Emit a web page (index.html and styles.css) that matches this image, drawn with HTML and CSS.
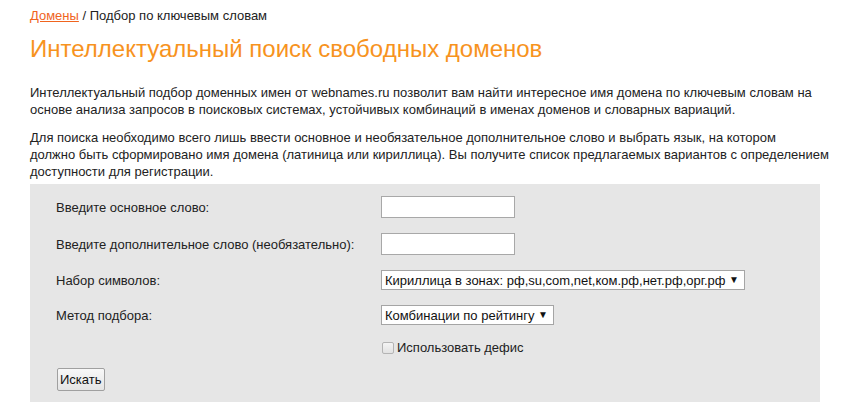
FILE: index.html
```html
<!DOCTYPE html>
<html lang="ru">
<head>
  <meta charset="UTF-8">
  <title>Подбор по ключевым словам</title>
  <link rel="stylesheet" href="styles.css">
</head>
<body>
  <div class="page">
    <div class="breadcrumbs">
      <a href="#">Домены</a> / Подбор по ключевым словам
    </div>

    <h1>Интеллектуальный поиск свободных доменов</h1>

    <div class="intro">
      <p>Интеллектуальный подбор доменных имен от webnames.ru позволит вам найти интересное имя домена по ключевым словам на основе анализа запросов в поисковых системах, устойчивых комбинаций в именах доменов и словарных вариаций.</p>
      <p>Для поиска необходимо всего лишь ввести основное и необязательное дополнительное слово и выбрать язык, на котором<br>
      должно быть сформировано имя домена (латиница или кириллица). Вы получите список предлагаемых вариантов с определением доступности для регистрации.</p>
    </div>

    <form class="search-form">
      <div class="form-row">
        <label for="word1">Введите основное слово:</label>
        <input type="text" id="word1" class="text-input">
      </div>
      <div class="form-row">
        <label for="word2">Введите дополнительное слово (необязательно):</label>
        <input type="text" id="word2" class="text-input">
      </div>
      <div class="form-row">
        <label for="charset">Набор символов:</label>
        <span class="select-wrap charset">
          <select id="charset">
            <option>Кириллица в зонах: рф,su,com,net,ком.рф,нет.рф,орг.рф</option>
            <option>Латиница</option>
          </select>
        </span>
      </div>
      <div class="form-row">
        <label for="method">Метод подбора:</label>
        <span class="select-wrap method">
          <select id="method">
            <option>Комбинации по рейтингу</option>
            <option>Все комбинации</option>
          </select>
        </span>
      </div>
      <div class="form-row check-row">
        <span class="spacer"></span>
        <label class="check-label"><input type="checkbox" class="check"> Использовать дефис</label>
      </div>
      <div class="form-row submit-row">
        <button type="submit">Искать</button>
      </div>
    </form>
  </div>
</body>
</html>
```

FILE: styles.css
```css
body {
  margin: 0;
  padding: 0;
  background: #fff;
  font-family: "Liberation Sans", Arial, sans-serif;
  font-size: 13px;
  color: #222;
}
.page {
  width: 790px;
  padding: 7px 32px 0 30px;
}
.breadcrumbs {
  line-height: 17px;
}
.breadcrumbs a {
  color: #f0641e;
}
h1 {
  margin: 11px 0 21px 0;
  font-size: 24px;
  line-height: 28px;
  font-weight: normal;
  color: #f7931e;
}
.intro {
  margin-right: -16px;
}
.intro p {
  margin: 0 0 11px 0;
  line-height: 17px;
}
.intro p:last-child {
  margin-bottom: 4px;
}
.search-form {
  background: #e6e6e6;
  padding: 12px 26px 12px 26px;
}
.form-row {
  display: flex;
  align-items: center;
  margin-bottom: 15px;
}
.form-row label,
.form-row .spacer {
  width: 325px;
  flex: none;
}
.text-input {
  width: 134px;
  height: 22px;
  box-sizing: border-box;
  border: 1px solid #a8a8a8;
  background: #fff;
  padding: 2px 3px;
  font: inherit;
}
.select-wrap {
  position: relative;
  display: inline-block;
}
.select-wrap select {
  appearance: none;
  -webkit-appearance: none;
  height: 20px;
  box-sizing: border-box;
  border: 1px solid #a5a5a5;
  background: #fff;
  padding: 0 18px 0 3px;
  font: inherit;
  color: #111;
}
.select-wrap::after {
  content: "\25BC";
  position: absolute;
  right: 6px;
  top: 5px;
  font-size: 10px;
  line-height: 10px;
  color: #111;
  pointer-events: none;
}
.charset select {
  width: 364px;
}
.method select {
  width: 173px;
}
.check-row {
  margin-bottom: 13px;
}
.check-row .check-label {
  width: auto;
  display: flex;
  align-items: center;
}
.check {
  appearance: none;
  -webkit-appearance: none;
  width: 12px;
  height: 12px;
  margin: 0 3px 0 1px;
  border: 1px solid #b4b4b4;
  border-radius: 2px;
  background: linear-gradient(#f4f4f4, #e2e2e2);
}
.submit-row {
  margin-bottom: 0;
}
button {
  height: 23px;
  padding: 0 2px;
  margin-left: 1px;
  border: 1px solid #a0a0a0;
  border-radius: 2px;
  background: linear-gradient(#f8f8f8, #e4e4e4);
  font: inherit;
  color: #111;
}
```
